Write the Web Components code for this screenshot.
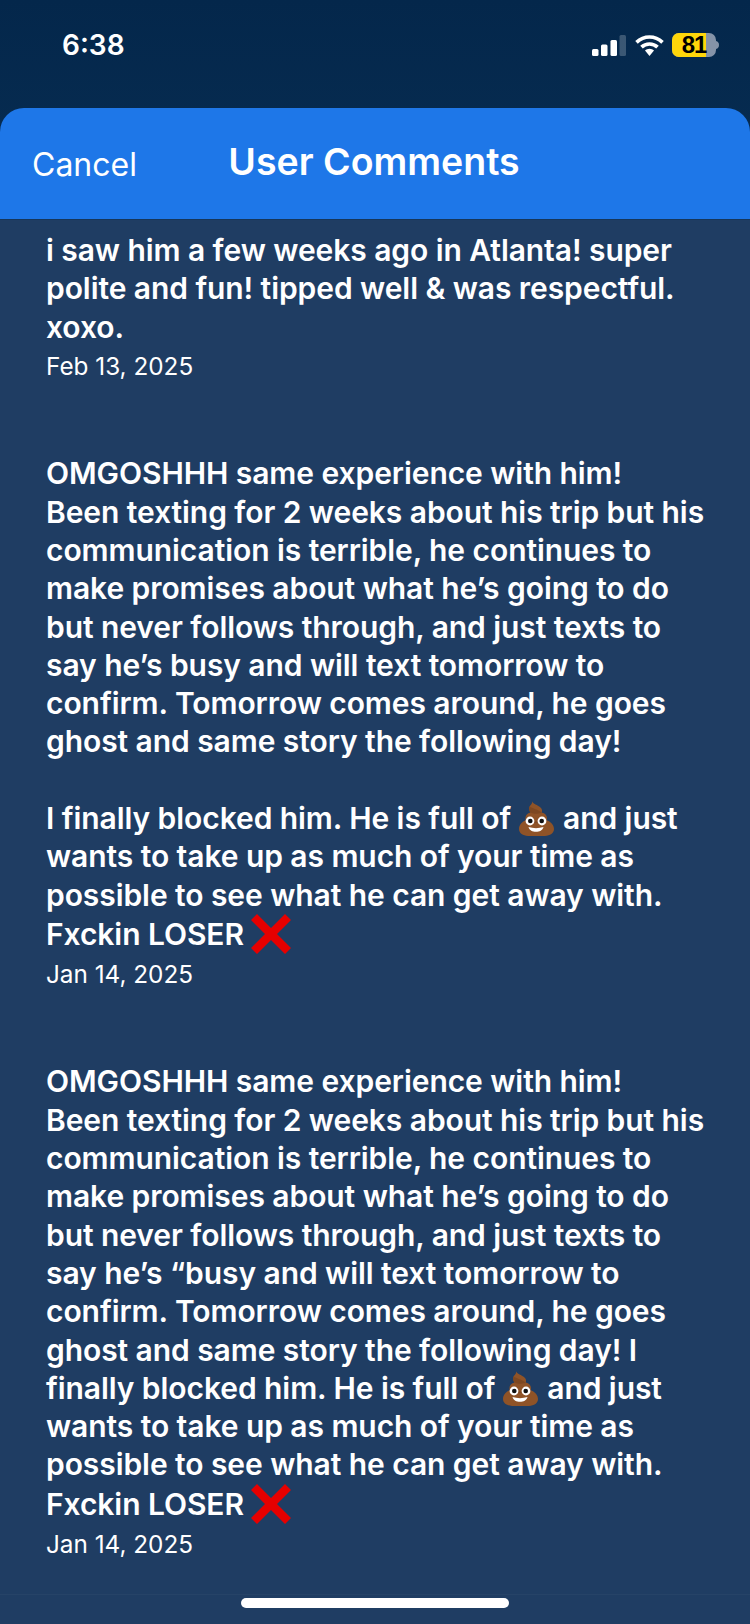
<!DOCTYPE html>
<html><head><meta charset="utf-8"><style>
html,body{margin:0;padding:0;background:#1f3d63}
body{width:750px;height:1624px;overflow:hidden;font-family:Inter,"Liberation Sans",sans-serif;color:#fff}
</style></head><body>
<app-screen>
<status-bar slot="status"></status-bar>
<sheet-header slot="header" cancel="Cancel" title-text="User Comments"></sheet-header>
<user-comment date="Feb 13, 2025">i saw him a few weeks ago in Atlanta! super<br>polite and fun! tipped well &amp; was respectful.<br>xoxo.</user-comment>
<user-comment date="Jan 14, 2025">OMGOSHHH same experience with him!<br>Been texting for 2 weeks about his trip but his<br>communication is terrible, he continues to<br>make promises about what he’s going to do<br>but never follows through, and just texts to<br>say he’s busy and will text tomorrow to<br>confirm. Tomorrow comes around, he goes<br>ghost and same story the following day!<br><br>I finally blocked him. He is full of <poop-icon></poop-icon> and just<br>wants to take up as much of your time as<br>possible to see what he can get away with.<br>Fxckin LOSER <cross-icon></cross-icon></user-comment>
<user-comment date="Jan 14, 2025">OMGOSHHH same experience with him!<br>Been texting for 2 weeks about his trip but his<br>communication is terrible, he continues to<br>make promises about what he’s going to do<br>but never follows through, and just texts to<br>say he’s “busy and will text tomorrow to<br>confirm. Tomorrow comes around, he goes<br>ghost and same story the following day! I<br>finally blocked him. He is full of <poop-icon></poop-icon> and just<br>wants to take up as much of your time as<br>possible to see what he can get away with.<br>Fxckin LOSER <cross-icon></cross-icon></user-comment>
<home-bar slot="home"></home-bar>
</app-screen>
<script>
function def(name, html, init){
  customElements.define(name, class extends HTMLElement{
    constructor(){super();this.attachShadow({mode:'open'}).innerHTML=html;}
    connectedCallback(){init&&init(this);}
  });
}
def('app-screen',`<style>
:host{display:block;position:relative;width:750px;height:1624px;background:#1f3d63;overflow:hidden}
.top{background:linear-gradient(#04274b,#062b50 60%,#062b4c);height:220px;display:block}
.main{height:1404px;overflow:hidden;padding:11px 0 0 46px;box-sizing:border-box;display:flex;flex-direction:column;gap:73px}
.home{position:absolute;left:0;right:0;bottom:0}
</style>
<div class="top"><slot name="status"></slot><slot name="header"></slot></div>
<div class="main"><slot></slot></div>
<div class="home"><slot name="home"></slot></div>`);
def('status-bar',`<style>
:host{display:flex;height:108px;box-sizing:border-box;justify-content:space-between;align-items:flex-start}
.t{font:600 28px/1 Inter,sans-serif;margin:31px 0 0 62px;color:#fff}
.r{display:flex;align-items:center;margin:33px 31px 0 0;height:24px}
svg{display:block}
.b{position:relative;width:44px;height:24px;margin-left:8px;border-radius:7px;background:#8593a8}
.f{position:absolute;left:0;top:0;bottom:0;width:34px;background:#ffd60a;border-radius:7px 0 0 7px}
.n{position:absolute;left:0;right:0;top:0;text-align:center;font:700 24px/24px "Liberation Sans",sans-serif;color:#000;letter-spacing:-1px}
</style>
<div class="t">6:38</div>
<div class="r">
<svg width="34" height="21" viewBox="0 0 34 21"><rect x="0" y="14" width="6.500" height="7" rx="1.500" fill="#fff"/><rect x="9" y="9.500" width="6.500" height="11.500" rx="1.500" fill="#fff"/><rect x="18.500" y="5" width="6.500" height="16" rx="1.500" fill="#fff"/><rect x="27.500" y="0" width="6.500" height="21" rx="1.500" fill="#fff" fill-opacity=".22"/></svg>
<svg style="margin-left:9px" width="29" height="21" viewBox="0 0 29 21"><path d="M1.500 7.300C5 4 9.500 2 14.500 2s9.500 2 13 5.300M6.500 12.200c2.100-2 4.900-3.200 8-3.200s5.900 1.200 8 3.200" fill="none" stroke="#fff" stroke-width="3.700"/><path d="M10 15.600c1.200-1.100 2.800-1.800 4.500-1.800s3.300.7 4.500 1.800L14.500 21z" fill="#fff"/></svg>
<div class="b"><div class="f"></div><div class="n">81</div></div>
<svg width="3" height="8" viewBox="0 0 3 8"><path d="M0 0c2 .5 3 2 3 4S2 7.500 0 8z" fill="#8593a8"/></svg>
</div>`);
def('sheet-header',`<style>
:host{display:block;height:112px;box-sizing:border-box;background:#1e77e8;border-radius:24px 24px 0 0;position:relative;border-bottom:1px solid #16365a}
.c{position:absolute;left:32px;top:36px;font:400 32px/42px Inter,sans-serif}
.h{display:block;text-align:center;font:600 37.500px/44px Inter,sans-serif;padding:32px 2px 0 0}
</style><div class="c"></div><div class="h"></div>`,el=>{
  el.shadowRoot.querySelector('.c').textContent=el.getAttribute('cancel');
  el.shadowRoot.querySelector('.h').textContent=el.getAttribute('title-text');
});
def('user-comment',`<style>
:host{display:block;font:600 30px/38.300px Inter,sans-serif;letter-spacing:-.07px;color:#fff;white-space:nowrap}
.d{font:400 24.300px/30px Inter,sans-serif;letter-spacing:0;margin-top:5.500px}
</style><slot></slot><div class="d"></div>`,el=>{
  el.shadowRoot.querySelector('.d').textContent=el.getAttribute('date');
});
def('poop-icon',`<style>:host{display:inline-block;width:37px;height:35px;vertical-align:-7px}svg{display:block}</style>
<svg width="35" height="35" viewBox="0 0 35 35"><path d="M13 0c.5 3 5 3.500 8 6 2 1.700 2.500 3.700 1.700 5.500 3.300.6 5.300 3 5.300 5.700 0 .7-.1 1.400-.4 2 3.800 1.300 7.400 4.500 7.400 8.800 0 4.200-4 6.500-9 7C20 35.300 14 35.300 9 35 4 34.500 0 32.200 0 28c0-4.300 3.300-7.500 6.800-8.800-.3-.6-.4-1.300-.4-2 0-2.700 2-5 5-5.700C10 9.500 9.500 7.500 10.500 5.500 11.500 3.500 13.500 3 13 0z" fill="#8f5327"/><path d="M10.500 5.500c3 2 7 2.500 12.200 6-4 2-8 1.500-11.300 0C10 9.500 9.500 7.500 10.500 5.500zM6.500 18c5 3 15 3 21 1 .5 1-1 3-3 3H10c-2 0-3.500-2-3.500-4z" fill="#6e3d1b" fill-opacity=".5"/><circle cx="11" cy="20" r="4.400" fill="#fff"/><circle cx="23" cy="20" r="4.400" fill="#fff"/><circle cx="11.300" cy="20" r="2.300" fill="#111"/><circle cx="22.700" cy="20" r="2.300" fill="#111"/><path d="M9.500 26c4.500 1.500 10.500 1.500 15 0-1 3.500-4 4.800-7.500 4.800S10.500 29.500 9.500 26z" fill="#fff"/></svg>`);
def('cross-icon',`<style>:host{display:inline-block;width:40px;height:40px;vertical-align:-9px}svg{display:block}</style>
<svg width="40" height="40" viewBox="0 0 40 40"><path d="M0 6 6 0l14 14L34 0l6 6-14 14 14 14-6 6-14-14L6 40l-6-6 14-14z" fill="#e60000"/></svg>`);
def('home-bar',`<style>:host{display:block;height:30px;position:relative;box-sizing:border-box;border-top:1px solid rgba(255,255,255,.03)}
.l{position:absolute;left:241px;top:3px;width:268px;height:10px;border-radius:5px;background:#fff}</style><div class="l"></div>`);
</script>
</body></html>
